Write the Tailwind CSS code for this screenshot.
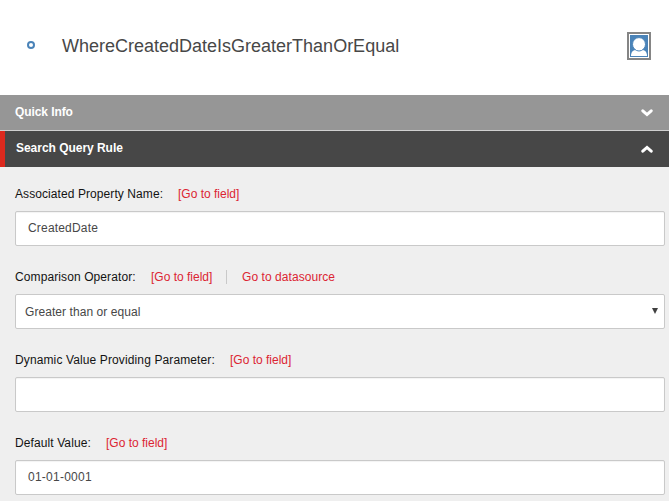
<!DOCTYPE html>
<html lang="en">
<head>
<meta charset="utf-8">
<title>WhereCreatedDateIsGreaterThanOrEqual</title>
<script src="https://cdn.jsdelivr.net/npm/@tailwindcss/browser@4"></script>
</head>
<body class="h-[501px] w-[669px] overflow-hidden bg-[#efefef] font-['Liberation_Sans',Arial,sans-serif] text-[12px] leading-[16px] text-[#131313]">
<header class="flex h-[95px] items-center bg-white pr-[18px] pb-[3px] pl-[27px]">
  <svg class="-mt-[2px] h-2 w-2 shrink-0" viewBox="0 0 8 8"><circle cx="4" cy="4" r="3" fill="none" stroke="#4a83b8" stroke-width="2"/></svg>
  <h1 class="ml-[27px] flex-1 text-[18px] leading-6 whitespace-nowrap text-[#474747]">WhereCreatedDateIsGreaterThanOrEqual</h1>
  <svg class="h-7 w-6 shrink-0" viewBox="0 0 24 28"><rect x="1" y="1" width="22" height="26" fill="#fff" stroke="#858585" stroke-width="2"/><rect x="3" y="3" width="18" height="22" fill="#4a83b8"/><path d="M4 24c0-4 2-6 5-6h6c3 0 5 2 5 6z" fill="#fff"/><ellipse cx="12" cy="12.300" rx="6.500" ry="6.700" fill="#fff" stroke="#4a83b8" stroke-width="1"/></svg>
</header>
<section class="flex h-9 items-center justify-between border-b border-[#d0d0d0] bg-[#969696] pr-4 pb-[2px] pl-[15px] font-bold tracking-[-0.08px] text-white">
  <span>Quick Info</span>
  <svg class="mt-[2px] h-2 w-3" viewBox="0 0 12 8" fill="none" stroke="#fff" stroke-width="3" stroke-linecap="round"><path d="M1.800 1.800 6 5.600l4.200-3.800"/></svg>
</section>
<section class="flex h-9 items-center justify-between border-l-[5px] border-[#dc291e] bg-[#474747] pr-4 pb-[3px] pl-[11px] font-bold tracking-[-0.03px] text-white">
  <span>Search Query Rule</span>
  <svg class="mt-[3px] h-2 w-3" viewBox="0 0 12 8" fill="none" stroke="#fff" stroke-width="3" stroke-linecap="round"><path d="M1.800 6.200 6 2.400l4.200 3.800"/></svg>
</section>
<main class="flex flex-col gap-[13px] pt-[19px] pr-1 pl-[15px] whitespace-nowrap">
  <div>
    <div class="flex h-[25px]"><label class="w-[163px] tracking-[0.08px]">Associated Property Name:</label><a class="text-[#dc2432]">[Go to field]</a></div>
    <div class="flex h-[35px] items-center rounded-[2px] border border-[#c9c9c9] bg-white pb-px pl-3 tracking-[0.18px] text-[#474747] shadow-[inset_0_1px_1px_#0000000d]">CreatedDate</div>
  </div>
  <div class="pt-[10px]">
    <div class="flex h-[25px]"><label class="w-[136px] tracking-[0.1px]">Comparison Operator:</label><a class="w-[61px] text-[#dc2432]">[Go to field]</a><span class="mt-px ml-[14px] h-[14px] border-l border-[#c9c9c9]"></span><a class="ml-[15px] tracking-[0.06px] text-[#dc2432]">Go to datasource</a></div>
    <div class="flex h-[35px] items-center justify-between rounded-[2px] border border-[#c9c9c9] bg-white pr-[6px] pl-[9px] tracking-[0.07px] text-[#474747]"><span>Greater than or equal</span><svg class="-mt-[2px] h-[6px] w-[6px]" viewBox="0 0 6 6"><path d="M0 0h6L3 6z" fill="#404040"/></svg></div>
  </div>
  <div class="pt-[10px]">
    <div class="flex h-[25px]"><label class="w-[215px] tracking-[0.12px]">Dynamic Value Providing Parameter:</label><a class="text-[#dc2432]">[Go to field]</a></div>
    <div class="h-[35px] rounded-[2px] border border-[#c9c9c9] bg-white shadow-[inset_0_1px_1px_#0000000d]"></div>
  </div>
  <div class="pt-[10px]">
    <div class="flex h-[25px]"><label class="w-[91px] tracking-[0.1px]">Default Value:</label><a class="text-[#dc2432]">[Go to field]</a></div>
    <div class="flex h-[35px] items-center rounded-[2px] border border-[#c9c9c9] bg-white pb-px pl-3 tracking-[0.25px] text-[#474747] shadow-[inset_0_1px_1px_#0000000d]">01-01-0001</div>
  </div>
</main>
</body>
</html>
